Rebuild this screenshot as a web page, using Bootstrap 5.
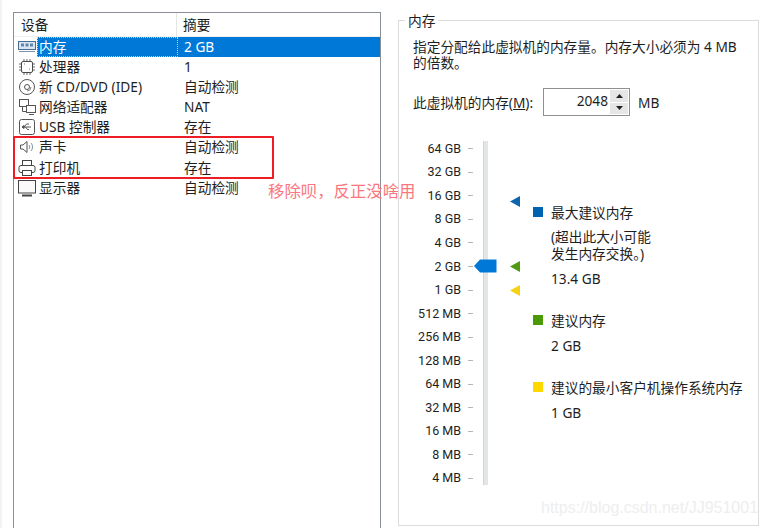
<!DOCTYPE html>
<html lang="zh-CN">
<head>
  <meta charset="UTF-8" />
  <meta name="viewport" content="width=device-width, initial-scale=1" />
  <title>虚拟机设置</title>
  <link href="https://cdn.jsdelivr.net/npm/bootstrap@5.3.3/dist/css/bootstrap.min.css" rel="stylesheet" />
  <style>
    html, body { height: 100%; overflow: hidden; }
    body { background: #fff; color: #1e1e1e; font: 13.7px/17px "Noto Sans", "Noto Sans CJK SC", sans-serif; border-left: 2px solid #f3f3f3; position: relative; }
    .page-wrap { height: 528px; padding: 12px 4px 3px 11px; gap: 17px; }

    .dev-panel { width: 368px; height: 530px; border: 1px solid #8a8f96; flex: none; }
    .dev-head { height: 24px; border-bottom: 1px solid #f0f0f0; }
    .dev-head span { line-height: 23px; padding-left: 7px; }
    .dev-head span:first-child { width: 163px; border-right: 1px solid #e5e5e5; }
    .dev-head span:last-child { padding-left: 6px; }
    .dev-row { height: 20.1px; line-height: 20px; }
    .dev-icon { width: 23px; flex: none; padding-left: 4px; height: 20px; }
    .dev-icon svg { display: block; margin-top: 1px; }
    .dev-name { width: 141px; flex: none; padding-left: 2px; white-space: nowrap; }
    .dev-sum { padding-left: 6px; }
    .dev-on { background: #0078d7; color: #fff; }
    .dev-on .dev-name { outline: 1px dotted #e8c89a; outline-offset: -1px; }

    .red-box { position: absolute; left: 11px; top: 136px; width: 261px; height: 43px; border: 2px solid #ee1c25; border-radius: 1px; }
    .red-note { position: absolute; left: 266px; top: 180px; color: #fb7780; font-size: 16.4px; line-height: 22px; white-space: nowrap; }
    .water-mark { position: absolute; left: 539px; top: 498px; color: #eeeeee; font: 16px/20px "Liberation Sans", sans-serif; white-space: nowrap; }

    .mem-group { width: 361px; height: 506px; margin-top: 8px; border: 1px solid #dcdcdc; padding: 17px 14px 0 14px; position: relative; flex: none; }
    .mem-title { position: absolute; left: 6px; top: -9px; background: #fff; padding: 0 3px; }
    .mem-intro { width: 335px; margin: 0; padding-top: 1px; line-height: 15.5px; }
    .mem-line { margin-top: 18px; height: 28px; }
    .mem-label { width: 130px; flex: none; white-space: nowrap; }
    .spin-box { width: 87px; height: 28px; border: 1px solid #8f8f8f; flex: none; }
    .spin-box .form-control { border: 0; border-radius: 0; height: 26px; padding: 0 1px 4px 0; font: inherit; text-align: right; color: #1e1e1e; box-shadow: none; }
    .spin-btns { width: 20px; flex: none; background: #fff; gap: 1px; padding: 1px; }
    .spin-btns .btn { flex: 1; padding: 0; border: 0; border-radius: 0; background: #e6e6e6; font-size: 0; display: flex; align-items: center; justify-content: center; }
    .mem-unit { margin-left: 8px; }

    .scale-area { margin-top: 14px; }
    .scale-col { width: 56px; flex: none; padding-top: 7px; }
    .scale-row { height: 23.55px; line-height: 16px; white-space: nowrap; font-family: Roboto, sans-serif; font-size: 12.5px; }
    .scale-row span { width: 48px; text-align: right; flex: none; }
    .scale-row i { width: 5px; height: 1px; background: #b5b5b5; margin-left: 7px; flex: none; }
    .scale-track { width: 5px; height: 344px; margin: 11px 0 0 14px; background: #e3e6e6; border-left: 1px solid #d2d6d6; position: relative; flex: none; }
    .scale-thumb { position: absolute; left: -10px; top: 118px; }
    .scale-marks { width: 45px; position: relative; flex: none; }
    .scale-marks svg { position: absolute; left: 22px; }
    .legend-col { width: 220px; padding-top: 74px; flex: none; }
    .legend-item { height: 16px; white-space: nowrap; }
    .legend-sq { width: 10px; height: 10px; margin-right: 8px; flex: none; }
    .legend-txt { padding-left: 18px; }
    .legend-wrap { width: 125px; }
  </style>
</head>
<body>
  <div class="page-wrap d-flex">
    <div class="dev-panel">
      <div class="dev-head d-flex"><span>设备</span><span>摘要</span></div>

      <div class="dev-row d-flex">
        <div class="dev-icon"><svg width="18" height="16" viewBox="0 0 18 16"><rect x="0.500" y="3.500" width="17" height="8" fill="#dbe6f1" stroke="#466d92"/><path d="M3 5.500h3v3H3zM7.500 5.500h3v3h-3zM12 5.500h3v3h-3z" fill="#5f87ad"/><path d="M1 13.500h16" stroke="#7d93a8"/></svg></div>
        <div class="dev-on d-flex flex-grow-1"><div class="dev-name">内存</div><div class="dev-sum">2 GB</div></div>
      </div>
      <div class="dev-row d-flex">
        <div class="dev-icon"><svg width="18" height="18" viewBox="0 0 18 18" fill="none" stroke="#4a4a4a"><rect x="3.500" y="3.500" width="11" height="11" rx="1.500"/><path d="M1 6h2M1 9h2M1 12h2M15 6h2M15 9h2M15 12h2M6 1v2M9 1v2M12 1v2M6 15v2M9 15v2M12 15v2" stroke="#666"/><path d="M6 6h1M11 11h1" stroke="#777"/></svg></div>
        <div class="dev-name">处理器</div><div class="dev-sum">1</div>
      </div>
      <div class="dev-row d-flex">
        <div class="dev-icon"><svg width="18" height="18" viewBox="0 0 18 18" fill="none" stroke="#555"><circle cx="9" cy="9" r="7.500"/><circle cx="9" cy="9" r="2.500"/><path d="M13 9a4 4 0 0 1-4 4" stroke="#888"/></svg></div>
        <div class="dev-name">新 CD/DVD (IDE)</div><div class="dev-sum">自动检测</div>
      </div>
      <div class="dev-row d-flex">
        <div class="dev-icon"><svg width="18" height="18" viewBox="0 0 18 18" fill="#fff" stroke="#555"><path d="M4.500 9v4.500H9" fill="none"/><rect x="1.500" y="1.500" width="9" height="7"/><rect x="8.500" y="7.500" width="9" height="7"/><path d="M11 16.500h5" fill="none"/></svg></div>
        <div class="dev-name">网络适配器</div><div class="dev-sum">NAT</div>
      </div>
      <div class="dev-row d-flex">
        <div class="dev-icon"><svg width="18" height="18" viewBox="0 0 18 18" fill="none" stroke="#555"><rect x="1.500" y="1.500" width="15" height="15" rx="2"/><path d="M4 9h9M6 9l2.500-3H11M7.500 9l2 2.500H11"/><path d="M4 9l2-1.500v3z" fill="#555"/></svg></div>
        <div class="dev-name">USB 控制器</div><div class="dev-sum">存在</div>
      </div>
      <div class="dev-row d-flex">
        <div class="dev-icon"><svg width="18" height="18" viewBox="0 0 18 18" fill="none" stroke="#555"><path d="M2.500 7v4H5l4 3.500v-11L5 7z"/><path d="M11 7a3 3 0 0 1 0 4M13 5a6 6 0 0 1 0 8" stroke="#7f9aa5"/></svg></div>
        <div class="dev-name">声卡</div><div class="dev-sum">自动检测</div>
      </div>
      <div class="dev-row d-flex">
        <div class="dev-icon"><svg width="18" height="18" viewBox="0 0 18 18" fill="#fff" stroke="#444"><rect x="4.500" y="1.500" width="9" height="6"/><rect x="1" y="6.500" width="16" height="7" rx="2"/><rect x="4.500" y="11.500" width="9" height="5"/></svg></div>
        <div class="dev-name">打印机</div><div class="dev-sum">存在</div>
      </div>
      <div class="dev-row d-flex">
        <div class="dev-icon"><svg width="18" height="18" viewBox="0 0 18 18" fill="none" stroke="#444"><rect x="0.500" y="1.500" width="17" height="12.500" fill="#fafafa"/><path d="M4 16.500h10" stroke-width="2"/></svg></div>
        <div class="dev-name">显示器</div><div class="dev-sum">自动检测</div>
      </div>
    </div>

    <div class="mem-group">
      <div class="mem-title">内存</div>
      <p class="mem-intro">指定分配给此虚拟机的内存量。内存大小必须为 4 MB 的倍数。</p>

      <div class="mem-line d-flex align-items-center">
        <div class="mem-label">此虚拟机的内存(<u>M</u>):</div>
        <div class="spin-box d-flex">
          <input class="form-control" type="text" value="2048" />
          <div class="spin-btns d-flex flex-column">
            <button class="btn" type="button"><svg width="7" height="4" viewBox="0 0 7 4"><path d="M3.500 0L7 4H0z" fill="#222"/></svg></button>
            <button class="btn" type="button"><svg width="7" height="4" viewBox="0 0 7 4"><path d="M0 0h7L3.500 4z" fill="#222"/></svg></button>
          </div>
        </div>
        <div class="mem-unit">MB</div>
      </div>

      <div class="scale-area d-flex" id="scaleArea">
        <div class="scale-col" id="scaleCol"></div>
        <div class="scale-track">
          <svg class="scale-thumb" width="23" height="14" viewBox="0 0 23 14"><path d="M0 7L6 0.500H22.500V13.500H6z" fill="#0078d7"/></svg>
        </div>
        <div class="scale-marks">
          <svg style="top:66px" width="10" height="11" viewBox="0 0 10 11"><path d="M10 0V11L0 5.500z" fill="#0f65ae"/></svg>
          <svg style="top:131px" width="10" height="11" viewBox="0 0 10 11"><path d="M10 0V11L0 5.500z" fill="#4e9a10"/></svg>
          <svg style="top:155px" width="10" height="11" viewBox="0 0 10 11"><path d="M10 0V11L0 5.500z" fill="#f6d312"/></svg>
        </div>
        <div class="legend-col">
          <div class="legend-item d-flex align-items-center"><span class="legend-sq" style="background:#0063b1"></span>最大建议内存</div>
          <div class="legend-txt legend-wrap" style="margin-top:8px">(超出此大小可能发生内存交换。)</div>
          <div class="legend-txt" style="margin-top:8px">13.4 GB</div>
          <div class="legend-item d-flex align-items-center" style="margin-top:25px"><span class="legend-sq" style="background:#4a9a06"></span>建议内存</div>
          <div class="legend-txt" style="margin-top:9px">2 GB</div>
          <div class="legend-item d-flex align-items-center" style="margin-top:25px"><span class="legend-sq" style="background:#ffd800"></span>建议的最小客户机操作系统内存</div>
          <div class="legend-txt" style="margin-top:9px">1 GB</div>
        </div>
      </div>
    </div>
  </div>

  <div class="red-box"></div>
  <div class="red-note">移除呗，反正没啥用</div>
  <div class="water-mark">https://blog.csdn.net/JJ951001</div>

  <script>
    const sizes = ["64 GB", "32 GB", "16 GB", "8 GB", "4 GB", "2 GB", "1 GB", "512 MB", "256 MB", "128 MB", "64 MB", "32 MB", "16 MB", "8 MB", "4 MB"];
    const scaleCol = document.getElementById("scaleCol");
    for (const s of sizes) {
      const row = document.createElement("div");
      row.className = "scale-row d-flex align-items-center";
      row.innerHTML = `<span>${s}</span><i></i>`;
      scaleCol.appendChild(row);
    }
  </script>
  <script src="https://cdn.jsdelivr.net/npm/bootstrap@5.3.3/dist/js/bootstrap.bundle.min.js"></script>
</body>
</html>
